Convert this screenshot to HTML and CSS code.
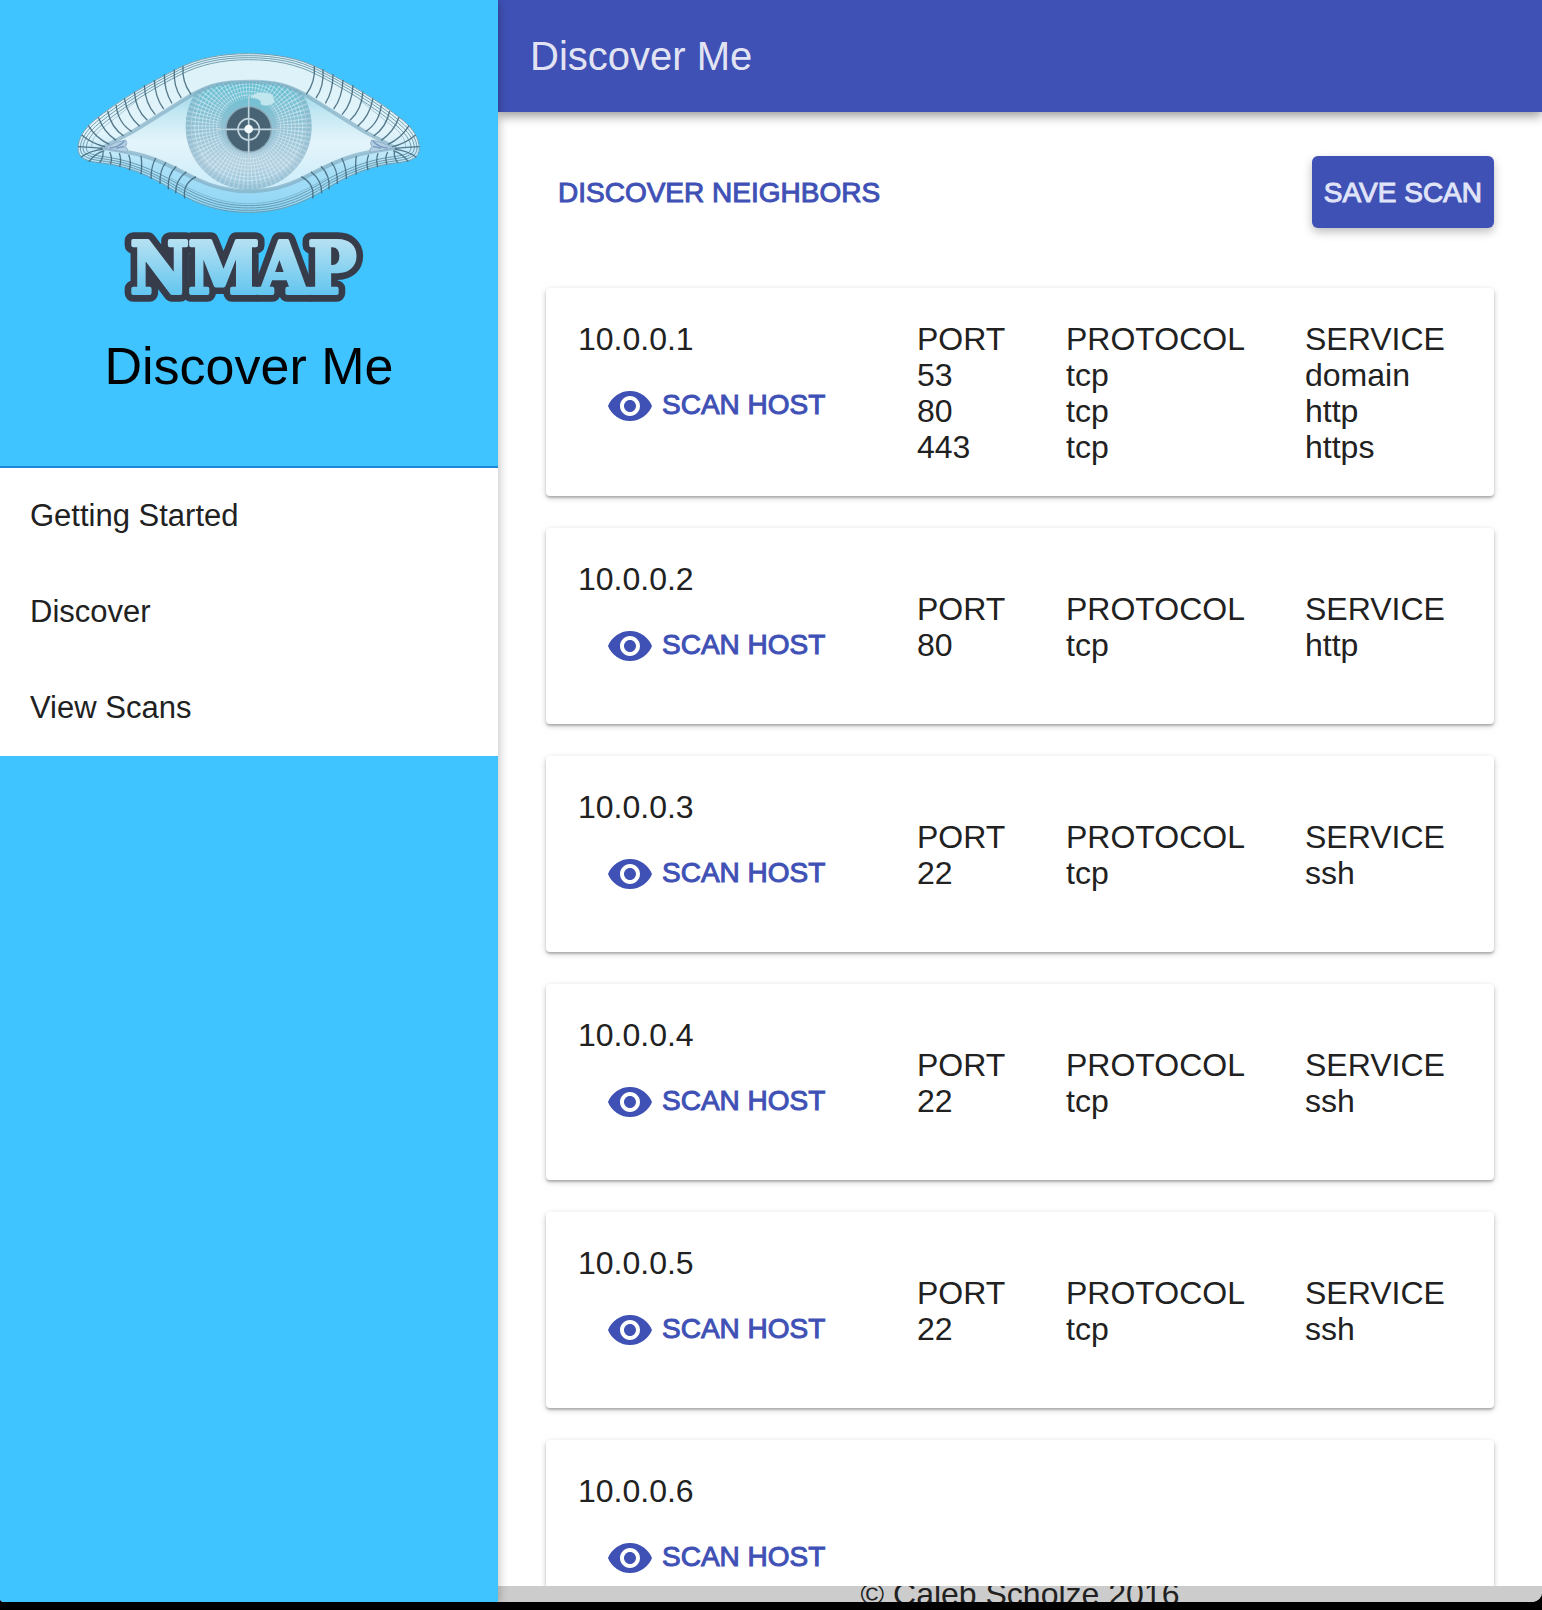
FILE: index.html
```html
<!DOCTYPE html>
<html lang="en">
<head>
<meta charset="utf-8">
<title>Discover Me</title>
<link rel="stylesheet" href="styles.css">
</head>
<body>
<svg class="defs" aria-hidden="true">
  <symbol id="icon-eye" viewBox="0 0 24 24"><path d="M12 4.500C7 4.500 2.730 7.610 1 12c1.730 4.390 6 7.500 11 7.500s9.270-3.110 11-7.500c-1.730-4.390-6-7.500-11-7.500zM12 17c-2.760 0-5-2.240-5-5s2.240-5 5-5 5 2.240 5 5-2.240 5-5 5zm0-8c-1.660 0-3 1.340-3 3s1.340 3 3 3 3-1.340 3-3-1.340-3-3-3z"/></symbol>
</svg>
<div class="app">
  <aside class="sidebar">
    <header class="brand">
      <svg class="logo" viewBox="48 66 1032 756" role="img" aria-label="Nmap logo">
        <defs>
          <linearGradient id="lid" x1="0" y1="70" x2="0" y2="548" gradientUnits="userSpaceOnUse">
            <stop offset="0" stop-color="#dcf2f8"/><stop offset=".5" stop-color="#e2f4fb"/><stop offset=".72" stop-color="#a9dff7"/><stop offset="1" stop-color="#8ed6f6"/>
          </linearGradient>
          <linearGradient id="ball" x1="0" y1="150" x2="0" y2="488" gradientUnits="userSpaceOnUse">
            <stop offset="0" stop-color="#8fd0e2"/><stop offset=".3" stop-color="#c3e8f3"/><stop offset=".55" stop-color="#e4f4fb"/><stop offset="1" stop-color="#c9ecf9"/>
          </linearGradient>
          <linearGradient id="iris" x1="0" y1="150" x2="0" y2="485" gradientUnits="userSpaceOnUse">
            <stop offset="0" stop-color="#5fbfd2"/><stop offset=".4" stop-color="#8fc1d3"/><stop offset=".75" stop-color="#b4cfdf"/><stop offset="1" stop-color="#93c6dc"/>
          </linearGradient>
          <linearGradient id="letters" x1="0" y1="633" x2="0" y2="795" gradientUnits="userSpaceOnUse">
            <stop offset="0" stop-color="#b4e0f2"/><stop offset="1" stop-color="#62c5ef"/>
          </linearGradient>
          <clipPath id="opening"><path d="M563 152C480 152 445 164 395 190L215 302Q165 328 125 354Q200 362 250 376C310 392 360 422 405 443C455 468 500 480 563 480C626 480 671 468 721 443C766 422 816 392 876 376Q926 362 1001 354Q961 328 911 302L731 190C681 164 646 152 563 152Z"/></clipPath>
          <g id="half" fill="none">
            <g stroke="#5f8fa3" stroke-width="3" opacity=".85">
              <path d="M563 71C480 71 410 85 350 116C270 156 170 213 100 271C70 296 51 326 51 355C51 384 75 392 105 397C180 404 240 424 310 464C380 507 450 547 563 547"/>
              <path d="M563 77C480 77 412 91 353 121C273 161 176 218 107 275C78 299 58 328 58 354C58 378 80 386 110 391C183 399 243 418 315 458C384 500 452 541 563 541"/>
              <path d="M563 83C480 83 415 97 356 127C278 166 182 223 114 280C86 303 66 330 66 353C66 373 86 380 115 385C186 393 247 413 319 453C387 493 455 534 563 534"/>
              <path d="M563 89C482 89 417 104 360 133C283 171 189 229 122 285C94 308 76 333 76 353C76 369 92 374 120 379C190 387 251 407 323 446C390 486 457 527 563 527"/>
              <path stroke-width="1.500" d="M230 210L120 298C104 313 92 330 92 352M563 521C470 521 400 486 330 444"/>
            </g>
            <path stroke="#7fabc0" stroke-width="12" opacity=".65" d="M563 155C480 155 445 166 395 193L215 305Q165 330 125 354Q200 364 250 378C310 395 360 425 405 447C455 471 500 484 563 484"/>
            <g stroke="#3e6478" stroke-width="4" opacity=".85">
              <path d="M366 108Q362 155 390 193M340 118Q336 168 361 204M310 133Q310 185 333 220M280 150Q282 202 308 237M250 165Q252 220 283 254M220 185Q224 240 259 271M190 205Q200 258 236 289M165 225Q172 280 212 304M140 243Q150 292 188 318M112 262Q128 306 165 331M82 287Q106 326 145 343M62 315Q95 342 132 350M51 350Q90 352 125 355M60 382Q85 362 125 358M84 395Q102 370 130 362"/>
              <path d="M116 398Q128 382 126 364M148 403Q156 385 146 366M176 411Q182 390 175 370M205 421Q212 396 203 374M240 433Q244 402 240 378M270 447Q270 410 284 384M297 462Q295 420 315 397M322 478Q318 436 346 409M344 490Q342 452 376 425M371 505Q364 462 405 440"/>
            </g>
            <path fill="#b3d0e3" stroke="#8eaecb" stroke-width="3" d="M130 354Q165 334 194 330Q201 342 193 350Q204 358 197 367Q160 361 130 354Z"/>
            <path stroke="#7898be" stroke-width="4" d="M146 354Q172 353 190 334M166 355Q181 350 190 350"/>
          </g>
          <text id="wordmark" class="logo-text" x="547" y="789" text-anchor="middle">NMAP</text>
        </defs>
        <path fill="url(#lid)" d="M563 70C480 70 410 84 350 115C270 155 170 212 100 270C70 295 50 325 50 355C50 385 75 393 105 398C180 405 240 425 310 465C380 508 450 548 563 548C676 548 746 508 816 465C886 425 946 405 1021 398C1051 393 1076 385 1076 355C1076 325 1056 295 1026 270C956 212 856 155 776 115C716 84 646 70 563 70Z"/>
        <g clip-path="url(#opening)">
          <rect x="100" y="140" width="930" height="360" fill="url(#ball)"/>
          <circle cx="563" cy="290" r="189" fill="url(#iris)"/>
          <circle cx="563" cy="290" r="136" fill="none" stroke="#dceff8" stroke-opacity=".55" stroke-width="104" pathLength="360" stroke-dasharray="1.500 3"/>
          <g fill="none" stroke="#e2f3fa" stroke-opacity=".5" stroke-width="3">
            <circle cx="563" cy="291" r="96"/><circle cx="563" cy="291" r="107"/><circle cx="563" cy="290" r="118"/><circle cx="563" cy="290" r="129"/><circle cx="563" cy="290" r="140"/><circle cx="563" cy="290" r="151"/><circle cx="563" cy="290" r="162"/><circle cx="563" cy="290" r="173"/>
          </g>
          <circle cx="563" cy="290" r="179" fill="none" stroke="#8eb6cb" stroke-opacity=".35" stroke-width="19"/>
        </g>
        <use href="#half"/>
        <use href="#half" transform="matrix(-1 0 0 1 1126 0)"/>
        <circle cx="563" cy="298" r="68" fill="#486474" stroke="#8ba9b9" stroke-width="4"/>
        <path fill="#c6e9f0" fill-opacity=".9" d="M567 202C585 183 618 184 634 195L641 214C630 229 608 230 599 222C602 207 585 204 567 202Z"/>
        <g fill="none" stroke="#c2d6df">
          <circle cx="563" cy="298" r="32" stroke-width="5"/>
          <path stroke-width="5" d="M495 298H631M563 230V366"/>
          <path stroke-width="4" stroke-opacity=".75" d="M467 298H495M631 298H660M563 198V230M563 366V395"/>
        </g>
        <circle cx="563" cy="297" r="13" fill="#f2fafd"/>
        <use class="logo-outline" href="#wordmark"/>
        <use class="logo-face" href="#wordmark"/>
      </svg>
      <h1 class="brand-title">Discover Me</h1>
    </header>
    <nav class="nav">
      <a class="nav-item" href="#start">Getting Started</a>
      <a class="nav-item" href="#discover">Discover</a>
      <a class="nav-item" href="#scans">View Scans</a>
    </nav>
  </aside>
  <div class="main">
    <header class="topbar"><h2 class="topbar-title">Discover Me</h2></header>
    <main class="content">
      <div class="actions">
        <button class="button" type="button">DISCOVER NEIGHBORS</button>
        <button class="button button-raised" type="button">SAVE SCAN</button>
      </div>
      <section class="card">
        <div class="host"><div>10.0.0.1</div><button class="button scan" type="button"><svg class="icon" aria-hidden="true"><use href="#icon-eye"/></svg>SCAN HOST</button></div>
        <table class="ports">
          <thead><tr><th>PORT</th><th>PROTOCOL</th><th>SERVICE</th></tr></thead>
          <tbody><tr><td>53</td><td>tcp</td><td>domain</td></tr><tr><td>80</td><td>tcp</td><td>http</td></tr><tr><td>443</td><td>tcp</td><td>https</td></tr></tbody>
        </table>
      </section>
      <section class="card">
        <div class="host"><div>10.0.0.2</div><button class="button scan" type="button"><svg class="icon" aria-hidden="true"><use href="#icon-eye"/></svg>SCAN HOST</button></div>
        <table class="ports">
          <thead><tr><th>PORT</th><th>PROTOCOL</th><th>SERVICE</th></tr></thead>
          <tbody><tr><td>80</td><td>tcp</td><td>http</td></tr></tbody>
        </table>
      </section>
      <section class="card">
        <div class="host"><div>10.0.0.3</div><button class="button scan" type="button"><svg class="icon" aria-hidden="true"><use href="#icon-eye"/></svg>SCAN HOST</button></div>
        <table class="ports">
          <thead><tr><th>PORT</th><th>PROTOCOL</th><th>SERVICE</th></tr></thead>
          <tbody><tr><td>22</td><td>tcp</td><td>ssh</td></tr></tbody>
        </table>
      </section>
      <section class="card">
        <div class="host"><div>10.0.0.4</div><button class="button scan" type="button"><svg class="icon" aria-hidden="true"><use href="#icon-eye"/></svg>SCAN HOST</button></div>
        <table class="ports">
          <thead><tr><th>PORT</th><th>PROTOCOL</th><th>SERVICE</th></tr></thead>
          <tbody><tr><td>22</td><td>tcp</td><td>ssh</td></tr></tbody>
        </table>
      </section>
      <section class="card">
        <div class="host"><div>10.0.0.5</div><button class="button scan" type="button"><svg class="icon" aria-hidden="true"><use href="#icon-eye"/></svg>SCAN HOST</button></div>
        <table class="ports">
          <thead><tr><th>PORT</th><th>PROTOCOL</th><th>SERVICE</th></tr></thead>
          <tbody><tr><td>22</td><td>tcp</td><td>ssh</td></tr></tbody>
        </table>
      </section>
      <section class="card">
        <div class="host"><div>10.0.0.6</div><button class="button scan" type="button"><svg class="icon" aria-hidden="true"><use href="#icon-eye"/></svg>SCAN HOST</button></div>
      </section>
    </main>
    <footer class="footer">© Caleb Scholze 2016</footer>
  </div>
</div>
</body>
</html>
```

FILE: styles.css
```css
* {
  box-sizing: border-box;
}

body {
  margin: 0;
  height: 100vh;
  padding-bottom: 8px;
  background: #000;
  color: #212121;
  font-family: "Liberation Sans", Arial, sans-serif;
  font-size: 32px;
  line-height: 36px;
}

.defs {
  display: none;
}

.app {
  display: flex;
  height: 100%;
  overflow: hidden;
  background: #fff;
  border-radius: 0 0 10px 4px;
}

/* Sidebar */
.sidebar {
  flex: 0 0 498px;
  z-index: 2;
  background: #40c4ff;
  box-shadow: 0 2px 10px rgba(0, 0, 0, 0.3);
}

.brand {
  display: flex;
  flex-direction: column;
  align-items: center;
  gap: 32px;
  min-height: 468px;
  padding-top: 52px;
  border-bottom: 2px solid #1e88d8;
}

.logo {
  width: 344px;
  height: 252px;
  overflow: visible;
}

.logo-text {
  font-family: "DejaVu Serif Condensed", "DejaVu Serif", serif;
  font-size: 212px;
  font-weight: 700;
  stroke-linejoin: round;
}

.logo-outline {
  fill: #373c4b;
  stroke: #373c4b;
  stroke-width: 52px;
}

.logo-face {
  fill: url(#letters);
  stroke: url(#letters);
  stroke-width: 12px;
}

.brand-title {
  margin: 0;
  color: #000;
  font-size: 52px;
  font-weight: 400;
  line-height: 60px;
}

.nav {
  background: #fff;
}

.nav-item {
  display: block;
  padding: 0 30px;
  color: inherit;
  font-size: 31px;
  line-height: 96px;
  text-decoration: none;
}

/* Main column */
.main {
  display: flex;
  flex: 1;
  flex-direction: column;
  min-width: 0;
}

.topbar {
  display: flex;
  flex: none;
  align-items: center;
  height: 112px;
  padding: 0 32px;
  z-index: 1;
  background: #3f51b5;
  box-shadow: 0 4px 10px rgba(0, 0, 0, 0.4);
  color: rgba(255, 255, 255, 0.87);
}

.topbar-title {
  margin: 0;
  font-size: 40px;
  font-weight: 400;
}

.content {
  display: flex;
  flex: 1;
  flex-direction: column;
  gap: 32px;
  min-height: 0;
  padding: 44px 48px 0;
  overflow: hidden;
}

.actions {
  display: flex;
  flex: none;
  justify-content: space-between;
  margin-bottom: 28px;
}

.button {
  height: 72px;
  padding: 2px 12px 0;
  border: 0;
  border-radius: 6px;
  background: none;
  color: #3f51b5;
  font: inherit;
  font-size: 28px;
  -webkit-text-stroke: 1px currentColor;
}

.button-raised {
  background: #3f51b5;
  box-shadow: 0 4px 10px rgba(0, 0, 0, 0.26);
  color: #e0e4f8;
}

.card {
  display: flex;
  flex: none;
  justify-content: space-between;
  align-items: center;
  padding: 33px 0 31px 32px;
  border-radius: 4px;
  background: #fff;
  box-shadow: 0 2px 6px rgba(0, 0, 0, 0.2), 0 2px 2px rgba(0, 0, 0, 0.2);
}

.host {
  align-self: flex-start;
}

.scan {
  display: flex;
  align-items: center;
  gap: 8px;
  margin: 12px 16px;
  padding: 0 12px;
}

.icon {
  width: 48px;
  height: 48px;
  margin-top: 2px;
  fill: currentColor;
  stroke: none;
}

.ports {
  width: 577px;
  border-collapse: collapse;
  table-layout: fixed;
}

.ports th,
.ports td {
  padding: 0;
  font-weight: 400;
  text-align: left;
}

.ports th:nth-child(1) {
  width: 149px;
}

.ports th:nth-child(2) {
  width: 239px;
}

.footer {
  display: flex;
  flex: none;
  align-items: center;
  justify-content: center;
  height: 16px;
  overflow: hidden;
  background: #ccc;
}
```
